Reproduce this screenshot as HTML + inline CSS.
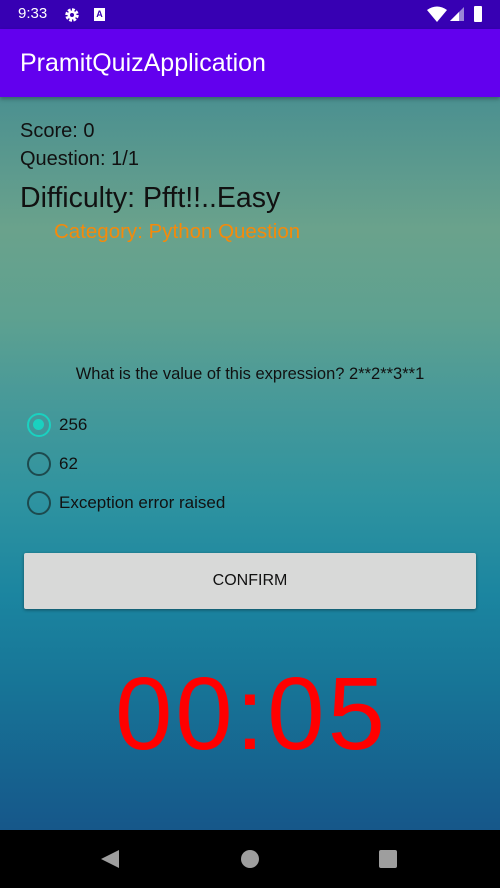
<!DOCTYPE html>
<html><head><meta charset="utf-8"><style>
*{margin:0;padding:0;box-sizing:border-box}
body{width:500px;height:888px;overflow:hidden;font-family:"Liberation Sans",sans-serif;position:relative;background:#000}
.status{position:absolute;top:0;left:0;width:500px;height:29px;background:#3700b3;color:#fff}
.app{position:absolute;top:29px;left:0;width:500px;height:68px;background:#6200ee;color:#fff;font-size:25px;padding:20px 0 0 20px;box-shadow:0 2px 4px rgba(0,0,0,.3);z-index:2}
.main{position:absolute;top:97px;left:0;width:500px;height:733px;background:linear-gradient(180deg,#4b9090 0%,#6aa28c 18%,#5ea190 30%,#4a9a98 40%,#2e93a0 55%,#1b85a0 68%,#177597 80%,#16578a 100%)}
.t{position:absolute;left:20px;color:#111;white-space:nowrap}
.radio{position:absolute;left:27px;width:24px;height:24px;border-radius:50%;border:2.5px solid #1d4a4e}
.radio.on{border-color:#1ad1c0}
.radio.on::after{content:"";position:absolute;left:4px;top:4px;width:11px;height:11px;border-radius:50%;background:#1ad1c0}
.lab{position:absolute;left:59px;font-size:17px;color:#111}
.btn{position:absolute;left:24px;top:456px;width:452px;height:56px;background:#d8d9d8;border-radius:2px;box-shadow:0 1px 3px rgba(0,0,0,.4);text-align:center;line-height:56px;font-size:16px;color:#111}
.timer{position:absolute;left:0;width:500px;text-align:center;top:565px;font-size:103px;line-height:1;color:#ff0000;letter-spacing:3px;text-indent:3px}
.nav{position:absolute;top:830px;left:0;width:500px;height:58px;background:#000}
</style></head><body>
<div class="status">
<span style="position:absolute;left:18px;top:5px;font-size:15px">9:33</span>
<svg style="position:absolute;left:64px;top:7px" width="16" height="16" viewBox="0 0 16 16"><circle cx="8" cy="8" r="5" fill="none" stroke="#fff" stroke-width="3.5" stroke-dasharray="2.6 1.3"/><circle cx="8" cy="8" r="4.5" fill="#fff"/><circle cx="8" cy="8" r="2" fill="#3700b3"/></svg>
<div style="position:absolute;left:94px;top:8px;width:11px;height:13px;background:#fff;font-size:9px;color:#3700b3;text-align:center;line-height:12px;font-weight:bold">A</div>
<svg style="position:absolute;left:427px;top:6px" width="20" height="16" viewBox="0 0 20 16"><path d="M0 4 Q10 -3 20 4 L10 16 Z" fill="#fff"/></svg>
<svg style="position:absolute;left:450px;top:7px" width="14" height="14" viewBox="0 0 14 14"><path d="M14 0 L14 14 L0 14 Z" fill="#9a86d6"/><path d="M9 5 L9 14 L0 14 Z" fill="#fff"/></svg>
<div style="position:absolute;left:474px;top:6px;width:8px;height:16px;background:#fff;border-radius:1px"></div>
</div>
<div class="app">PramitQuizApplication</div>
<div class="main">
<div class="t" style="top:23px;font-size:20px">Score: 0</div>
<div class="t" style="top:51px;font-size:20px">Question: 1/1</div>
<div class="t" style="top:85px;font-size:28.5px">Difficulty: Pfft!!..Easy</div>
<div class="t" style="left:54px;top:123px;font-size:20.5px;color:#f58a0a">Category: Python Question</div>
<div class="t" style="left:0;width:500px;text-align:center;top:268px;font-size:16.5px">What is the value of this expression? 2**2**3**1</div>
<div class="radio on" style="top:316px"></div><div class="lab" style="top:318px">256</div>
<div class="radio" style="top:355px"></div><div class="lab" style="top:357px">62</div>
<div class="radio" style="top:394px"></div><div class="lab" style="top:396px">Exception error raised</div>
<div class="btn">CONFIRM</div>
<div class="timer">00:05</div>
</div>
<div class="nav">
<svg style="position:absolute;left:101px;top:20px" width="18" height="18" viewBox="0 0 18 18"><path d="M18 0 L18 18 L0 9 Z" fill="#9e9e9e"/></svg>
<div style="position:absolute;left:241px;top:20px;width:18px;height:18px;border-radius:50%;background:#9e9e9e"></div>
<div style="position:absolute;left:379px;top:20px;width:18px;height:18px;border-radius:2px;background:#9e9e9e"></div>
</div>
</body></html>
